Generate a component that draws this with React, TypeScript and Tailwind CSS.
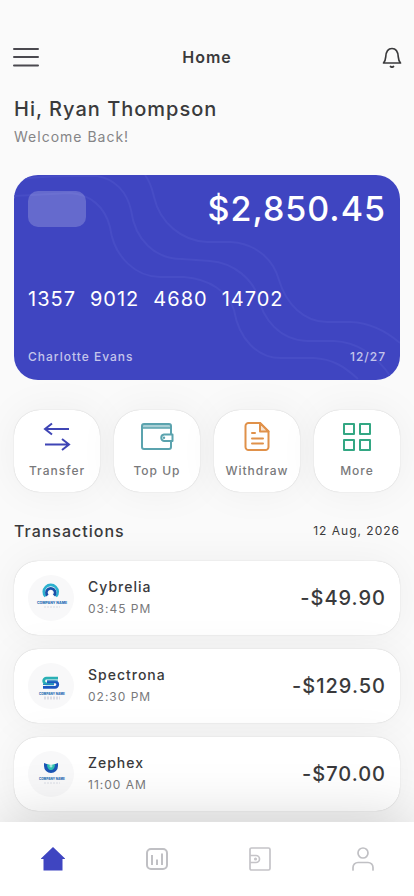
import React from 'react'

const actions = [
  { label: 'Transfer', icon: <TransferIcon /> },
  { label: 'Top Up', icon: <WalletIcon /> },
  { label: 'Withdraw', icon: <DocumentIcon /> },
  { label: 'More', icon: <GridIcon /> },
]

const transactions = [
  { name: 'Cybrelia', time: '03:45 PM', amount: '-$49.90', logo: <CybreliaLogo /> },
  { name: 'Spectrona', time: '02:30 PM', amount: '-$129.50', logo: <SpectronaLogo /> },
  { name: 'Zephex', time: '11:00 AM', amount: '-$70.00', logo: <ZephexLogo /> },
]

function TransferIcon() {
  return (
    <svg width="28" height="30" viewBox="0 0 28 30" fill="none" stroke="#3f45b5" strokeWidth="2">
      <path d="M26 7H2M9 1.5L2 7l7 5.5" />
      <path d="M2 22.500h24M19 17l7 5.500-7 5.500" />
    </svg>
  )
}

function WalletIcon() {
  return (
    <svg width="34" height="30" viewBox="0 0 34 30" fill="none" stroke="#5ba3ae" strokeWidth="2">
      <path d="M3 2h28v4H3z" fill="#a9cfd5" stroke="none" />
      <rect x="2" y="2" width="29" height="25" rx="2" />
      <path d="M2 6h29" strokeWidth="1.500" />
      <path d="M32.500 12.500H24a3.300 3.300 0 0 0 0 6.500h8.500z" fill="#fff" strokeLinejoin="round" />
      <circle cx="24" cy="15.700" r="1.200" fill="#5ba3ae" stroke="none" />
    </svg>
  )
}

function DocumentIcon() {
  return (
    <svg width="26" height="30" viewBox="0 0 26 30" fill="none" stroke="#e0914a" strokeWidth="2" strokeLinecap="round" strokeLinejoin="round">
      <path d="M16 1H4.500A3 3 0 0 0 1.500 4v21a3 3 0 0 0 3 3h17a3 3 0 0 0 3-3V9.500z" />
      <path d="M16 1v8.500h8.500z" fill="#f7e3d0" />
      <path d="M8 11h3M8 16.500h11M8 21.500h11" />
    </svg>
  )
}

function GridIcon() {
  return (
    <svg width="30" height="30" viewBox="0 0 30 30" fill="none" stroke="#33a783" strokeWidth="2" strokeLinejoin="round">
      <path d="M2 2h10v10H2zM18 2h10v10H18zM2 18h10v10H2zM18 18h10v10H18z" />
    </svg>
  )
}

function CompanyLines({ size }: { size: string }) {
  return (
    <>
      <text x="24" y="29" textAnchor="middle" fontSize={size} fontWeight="800" fill="#2a6fb5">COMPANY NAME</text>
      <path d="M16 32h16" stroke="#d9dce4" strokeDasharray="2 1" />
    </>
  )
}

function CybreliaLogo() {
  return (
    <svg width="46" height="46" viewBox="0 0 46 46" fill="none">
      <path d="M17.500 21.500a7 7 0 1 1 10.500 0" stroke="#2cb1cf" strokeWidth="2.600" />
      <path d="M19.500 20.500a4.300 4.300 0 1 1 6.500 0" stroke="#1a4fa8" strokeWidth="2.800" />
      <circle cx="22.700" cy="17.500" r="1.600" fill="#fff" />
      <path d="M20.500 23c0-3 .8-4 2.200-4s2.200 1 2.200 4z" fill="#fff" />
      <CompanyLines size="3.500" />
    </svg>
  )
}

function SpectronaLogo() {
  return (
    <svg width="46" height="46" viewBox="0 0 46 46" fill="none" strokeWidth="2.800">
      <path d="M30 15.200H18.500a2.800 2.800 0 0 0 0 5.600H26" stroke="#2ab0b5" />
      <path d="M15 24.300h12a2.700 2.700 0 0 0 0-5.500h-8" stroke="#1c55c0" />
      <path d="M30 18H19M15 21.400h11" stroke="#2387c0" strokeWidth="1.200" />
      <g transform="translate(0 3)">
        <CompanyLines size="3" />
      </g>
    </svg>
  )
}

function ZephexLogo() {
  return (
    <svg width="46" height="46" viewBox="0 0 46 46" fill="none">
      <path d="M16 12l4 1.500c0 2.500 1 3.500 3 3.500s3-1 3-3.500l4-1.500v3a7 7 0 0 1-14 0z" fill="#1b55b5" />
      <path d="M19 13l4 1 4-1c0 4-2 6-4 6s-4-2-4-6z" fill="#2fc0b0" />
      <path d="M23 13.500v3M21.500 15h3" stroke="#c9f3ea" />
      <CompanyLines size="3" />
    </svg>
  )
}

function Header() {
  return (
    <header className="flex items-center justify-between px-3 pt-[43px]">
      <button aria-label="Menu" className="flex h-7 w-7 items-center justify-center">
        <svg width="28" height="22" viewBox="0 0 28 22" stroke="#4a494f" strokeWidth="2" strokeLinecap="round">
          <path d="M2 3h24M2 11h24M2 19.500h24" />
        </svg>
      </button>
      <h1 className="text-base font-semibold tracking-[1px] text-[#3a3a3c]">Home</h1>
      <button aria-label="Notifications" className="flex h-7 w-7 items-center justify-end">
        <svg width="20" height="22" viewBox="0 0 20 22" fill="none" stroke="#3a3a3c" strokeWidth="1.700" strokeLinecap="round" strokeLinejoin="round">
          <path d="M1.500 17h17c-1.500-1.500-2-3-2.200-6C16 6 14.500 2.500 10 2.500S4 6 3.700 11c-.2 3-.7 4.500-2.200 6z" />
          <path d="M8.500 20.500c.8.700 2.200.7 3 0" />
        </svg>
      </button>
    </header>
  )
}

function BankCard() {
  return (
    <section className="relative mt-7 overflow-hidden rounded-3xl bg-[#3f45c1] p-3.5 text-white">
      <svg className="absolute inset-0 h-full w-full" viewBox="0 0 386 205" preserveAspectRatio="xMidYMid slice" fill="none" stroke="#474dc6" strokeWidth="2">
        <path d="M131 0c6 8 7 14 9 22 6 26 28 44 53 45h24c28 2 43 20 48 38 7 24 25 42 48 42h24c20 1 35 9 49 21" />
        <path d="M0 5C30 0 60 1 83 1c18 3 30 16 34 34 4 30 24 49 51 49l28 2c26 2 42 20 47 33 6 26 23 46 50 47h27c24 1 42 14 57 36" />
        <path d="M0 21l56-3c20 1 35 14 40 34 4 31 27 50 50 50h24c26 2 44 15 50 33 5 30 24 48 47 48h33c18 1 30 8 44 21" />
      </svg>
      <div className="relative flex h-[177px] flex-col justify-between">
        <div className="flex items-start justify-between">
          <div className="mt-0.5 h-9 w-[58px] rounded-[10px] bg-white/20" />
          <p className="text-[34px] leading-10 font-medium tracking-[1px]">$2,850.45</p>
        </div>
        <p className="mt-5 flex gap-3.5 text-xl tracking-[1px]">
          <span>1357</span>
          <span>9012</span>
          <span>4680</span>
          <span>14702</span>
        </p>
        <div className="flex justify-between text-xs leading-[18px] font-medium tracking-[1px] text-white/70">
          <span>Charlotte Evans</span>
          <span>12/27</span>
        </div>
      </div>
    </section>
  )
}

function BottomNav() {
  return (
    <nav className="sticky bottom-0 mt-auto flex h-[74px] items-center justify-around bg-white shadow-[0_0_60px_rgba(0,0,0,0.18)]">
      <button aria-label="Home">
        <svg width="26" height="26" viewBox="0 0 26 26" fill="#3f45c1">
          <path d="M13 1L1 12.500V13h2.500v11.500h19V13H25v-.5z" />
        </svg>
      </button>
      <button aria-label="Statistics">
        <svg width="24" height="24" viewBox="0 0 24 24" fill="none" stroke="#c0c0c4" strokeWidth="2">
          <rect x="2" y="2" width="20" height="20" rx="4" />
          <path d="M7 8v10M12 12.500V18M17 6.500V18" />
        </svg>
      </button>
      <button aria-label="Wallet">
        <svg width="24" height="26" viewBox="0 0 24 26" fill="none" stroke="#c5c4c8" strokeWidth="1.700">
          <rect x="2" y="2" width="20" height="22" rx="1.500" />
          <path d="M2 9.500h6a3.500 3.500 0 0 1 0 7H2" />
          <circle cx="7.500" cy="13" r=".7" />
        </svg>
      </button>
      <button aria-label="Profile">
        <svg width="24" height="26" viewBox="0 0 24 26" fill="none" stroke="#c0c0c4" strokeWidth="1.700" strokeLinecap="round">
          <circle cx="12" cy="7" r="5" />
          <path d="M2 24v-2.500a5 5 0 0 1 5-5h10a5 5 0 0 1 5 5V24" />
        </svg>
      </button>
    </nav>
  )
}

export default function App() {
  return (
    <div className="flex min-h-screen flex-col bg-[#fafafa] font-['Inter',sans-serif] text-[#3a3a3c]">
      <Header />
      <main className="px-3.5 pt-6 pb-2.5">
        <h2 className="text-xl leading-7 font-medium tracking-[1px]">Hi, Ryan Thompson</h2>
        <p className="mt-1 text-sm leading-5 tracking-[1px] text-[#858587]">Welcome Back!</p>

        <BankCard />

        <div className="mt-[30px] grid grid-cols-4 gap-3.5">
          {actions.map((action) => (
            <button
              key={action.label}
              className="flex h-[82px] flex-col items-center rounded-[26px] bg-white pt-3 text-xs leading-4 font-medium tracking-[1px] text-[#79797b] shadow-[0_0_1px_rgba(0,0,0,0.25),0_0_40px_rgba(0,0,0,0.05)]"
            >
              {action.icon}
              <span className="mt-[11px]">{action.label}</span>
            </button>
          ))}
        </div>

        <div className="mt-[27px] flex items-center justify-between">
          <h3 className="text-base font-medium tracking-[1px]">Transactions</h3>
          <span className="text-xs tracking-[1px]">12 Aug, 2026</span>
        </div>

        <ul className="mt-[18px] flex flex-col gap-3.5">
          {transactions.map((item) => (
            <li
              key={item.name}
              className="flex h-[74px] items-center rounded-3xl bg-white px-3.5 shadow-[0_0_1px_rgba(0,0,0,0.25),0_0_40px_rgba(0,0,0,0.05)]"
            >
              <div className="rounded-full bg-[#f8f8f9]">{item.logo}</div>
              <div className="ml-3.5 flex-1">
                <p className="text-sm leading-5 font-medium tracking-[1px]">{item.name}</p>
                <p className="mt-0.5 text-xs leading-5 tracking-[1px] text-[#79797b]">{item.time}</p>
              </div>
              <p className="text-xl font-medium tracking-[1px]">{item.amount}</p>
            </li>
          ))}
        </ul>
      </main>
      <BottomNav />
    </div>
  )
}
